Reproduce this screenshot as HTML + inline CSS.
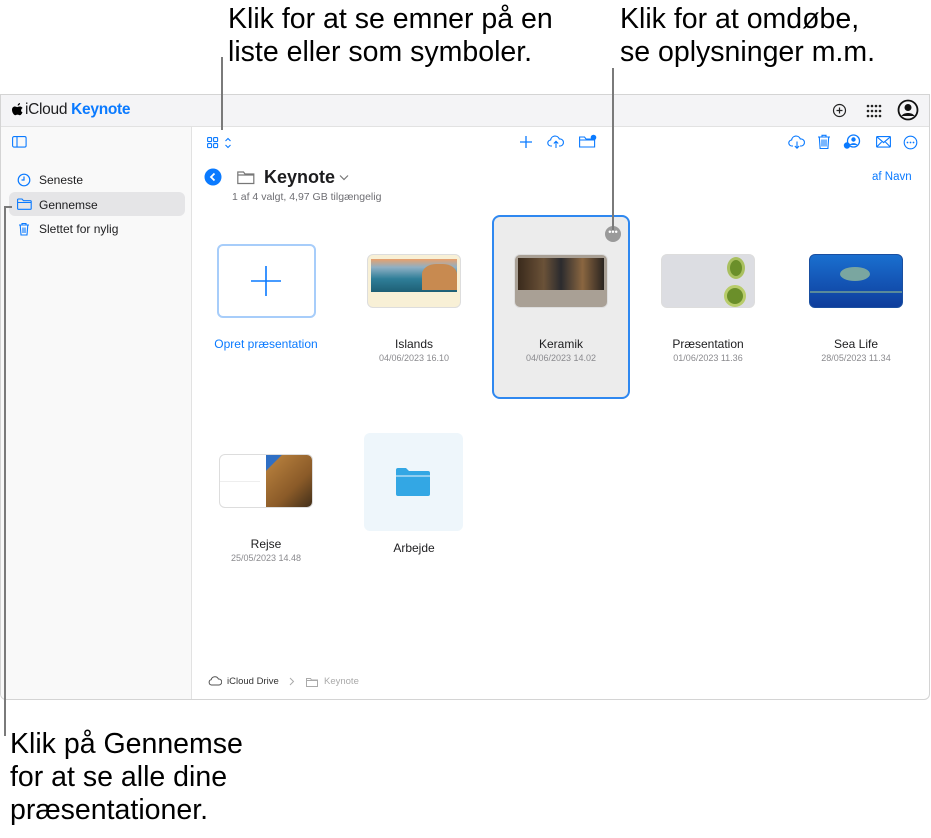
<!DOCTYPE html>
<html><head><meta charset="utf-8"><style>
*{margin:0;padding:0;box-sizing:border-box}
body{width:931px;height:838px;background:#fff;font-family:"Liberation Sans",sans-serif;position:relative;overflow:hidden;color:#1d1d1f}
.a{position:absolute}
.call{font-size:28.5px;line-height:33px;color:#000;white-space:nowrap}
.ln{background:#7a7a7a;position:absolute}
.nm{position:absolute;font-size:12px;text-align:center;width:140px;color:#1d1d1f}
.dt{position:absolute;font-size:9px;text-align:center;width:140px;color:#8a8a8e}
.th{position:absolute;width:94px;height:54px;border-radius:6px;overflow:hidden;border:1px solid #ddd}
svg{position:absolute}
</style></head><body>
<div class="a call" style="left:228px;top:3px">Klik for at se emner på en<br>liste eller som symboler.</div>
<div class="a call" style="left:620px;top:3px">Klik for at omdøbe,<br>se oplysninger m.m.</div>
<div class="a call" style="left:10px;top:728px">Klik på Gennemse<br>for at se alle dine<br>præsentationer.</div>

<div class="a" style="left:0;top:94px;width:930px;height:606px;border:1px solid #d4d4d4;border-radius:0 0 6px 6px;overflow:hidden">
 <div class="a" style="left:0;top:0;width:930px;height:32px;background:#f4f4f6;border-bottom:1px solid #e2e2e2"></div>
 <div class="a" style="left:0;top:32px;width:191px;height:574px;background:#f9f9f9;border-right:1px solid #e2e2e2"></div>
</div>
<svg style="left:12px;top:103px" width="12" height="13" viewBox="0 0 12 13"><path d="M8 0c0 1.5-1 2.6-2.3 2.6C5.6 1.3 6.6.2 8 0zM10.5 9.2c-.6 1.4-1.5 3-2.6 3-1 0-1.3-.6-2.4-.6s-1.5.6-2.4.6C1.800 12.200 0 9.400 0 6.800 0 4.600 1.400 3.500 2.800 3.500c1 0 1.800.6 2.400.6.600 0 1.600-.7 2.700-.6.500 0 1.900.2 2.700 1.500-2.200 1.300-1.800 4.100-.1 4.200z" fill="#000"/></svg>
<div class="a" style="left:25px;top:101px;font-size:15.5px;letter-spacing:-0.3px">iCloud <span style="color:#0a7aff;font-weight:bold">Keynote</span></div>
<!-- top right icons -->
<svg style="left:832px;top:103px" width="15" height="15"><circle cx="7.5" cy="7.5" r="6" fill="none" stroke="#222" stroke-width="1.2"/><path d="M7.5 4.5v6M4.5 7.5h6" stroke="#222" stroke-width="1.2"/></svg>
<svg style="left:866px;top:104px" width="16" height="14"><g fill="#222"><circle cx="2" cy="2" r="1.3"/><circle cx="6" cy="2" r="1.3"/><circle cx="10" cy="2" r="1.3"/><circle cx="14" cy="2" r="1.3"/><circle cx="2" cy="7" r="1.3"/><circle cx="6" cy="7" r="1.3"/><circle cx="10" cy="7" r="1.3"/><circle cx="14" cy="7" r="1.3"/><circle cx="2" cy="12" r="1.3"/><circle cx="6" cy="12" r="1.3"/><circle cx="10" cy="12" r="1.3"/><circle cx="14" cy="12" r="1.3"/></g></svg>
<svg style="left:897px;top:99px" width="22" height="22"><circle cx="11" cy="11" r="9.5" fill="none" stroke="#111" stroke-width="1.8"/><circle cx="11" cy="8.5" r="3.5" fill="#111"/><path d="M4.5 17c2-4 11-4 13 0" fill="#111"/></svg>
<!-- sidebar -->
<svg style="left:12px;top:136px" width="15" height="12"><rect x=".6" y=".6" width="13.5" height="10.5" rx="1.5" fill="none" stroke="#0a7aff" stroke-width="1.1"/><path d="M5 .6v10.5" stroke="#0a7aff" stroke-width="1.1"/></svg>
<div class="a" style="left:9px;top:192px;width:176px;height:24px;background:#e5e5e7;border-radius:6px"></div>
<svg style="left:17px;top:173px" width="14" height="14"><circle cx="7" cy="7" r="5.8" fill="none" stroke="#0a7aff" stroke-width="1.2"/><path d="M7 3.5V7H4.5" fill="none" stroke="#0a7aff" stroke-width="1.2"/></svg>
<div class="a" style="left:39px;top:173px;font-size:12px">Seneste</div>
<svg style="left:17px;top:198px" width="15" height="12"><path d="M.6 2V10.5a.8.8 0 0 0 .8.8h12a.8.8 0 0 0 .8-.8V3.5a.8.8 0 0 0-.8-.8H6.5L5 1H1.4a.8.8 0 0 0-.8 1zM.6 4.5h13.6" fill="none" stroke="#0a7aff" stroke-width="1.1"/></svg>
<div class="a" style="left:39px;top:198px;font-size:12px">Gennemse</div>
<svg style="left:18px;top:222px" width="12" height="14"><path d="M1 3h10M4 3V1.5h4V3M2.2 3l.8 10h6l.8-10M5 5.5v5.5M7 5.5v5.5" fill="none" stroke="#0a7aff" stroke-width="1.1"/></svg>
<div class="a" style="left:39px;top:222px;font-size:12px">Slettet for nylig</div>
<!-- toolbar -->
<svg style="left:207px;top:137px" width="26" height="12"><g fill="none" stroke="#0a7aff" stroke-width="1.1"><rect x=".6" y=".6" width="4" height="4" rx=".8"/><rect x="6.6" y=".6" width="4" height="4" rx=".8"/><rect x=".6" y="6.6" width="4" height="4" rx=".8"/><rect x="6.6" y="6.6" width="4" height="4" rx=".8"/><path d="M18.5 4l2.5-2.5 2.5 2.5M18.5 8l2.5 2.5 2.5-2.5"/></g></svg>
<svg style="left:519px;top:135px" width="14" height="14"><path d="M7 1v12M1 7h12" stroke="#0a7aff" stroke-width="1.3"/></svg>
<svg style="left:547px;top:135px" width="18" height="14"><path d="M5 11H4a3 3 0 0 1-.4-6A4.5 4.5 0 0 1 12.3 4a3.5 3.5 0 0 1 1.2 7H12M9 13V6.5M6.8 8.5L9 6.3l2.2 2.2" fill="none" stroke="#0a7aff" stroke-width="1.1"/></svg>
<svg style="left:579px;top:134px" width="18" height="15"><path d="M.6 3v10h15V5H7L5.5 3zM.6 6h15" fill="none" stroke="#0a7aff" stroke-width="1.1"/><circle cx="14.5" cy="3.5" r="2.8" fill="#0a7aff"/></svg>
<svg style="left:788px;top:135px" width="18" height="15"><path d="M5 11H4a3 3 0 0 1-.4-6A4.5 4.5 0 0 1 12.3 4a3.5 3.5 0 0 1 1.2 7H12M9 6.5V13M6.8 11L9 13.2l2.2-2.2" fill="none" stroke="#0a7aff" stroke-width="1.1"/></svg>
<svg style="left:817px;top:134px" width="14" height="16"><path d="M1 3h12M5 3V1.3h4V3M2.3 3l.8 11.5h7.8l.8-11.5M5 5.5v7M7 5.5v7M9 5.5v7" fill="none" stroke="#0a7aff" stroke-width="1.1"/></svg>
<svg style="left:843px;top:134px" width="18" height="16"><circle cx="10.5" cy="7" r="6" fill="none" stroke="#0a7aff" stroke-width="1.3"/><circle cx="10.5" cy="5.5" r="2.2" fill="#0a7aff"/><path d="M6.5 11c1.5-2.5 6.5-2.5 8 0" fill="#0a7aff"/><circle cx="4" cy="11.5" r="3.2" fill="#0a7aff"/></svg>
<svg style="left:876px;top:136px" width="15" height="12"><rect x=".6" y=".6" width="13.8" height="10.5" rx="1" fill="none" stroke="#0a7aff" stroke-width="1.1"/><path d="M.6 .6l7 6 7-6M.6 11l5-5M14.4 11l-5-5" fill="none" stroke="#0a7aff" stroke-width="1.1"/></svg>
<svg style="left:903px;top:135px" width="15" height="15"><circle cx="7.5" cy="7.5" r="6.3" fill="none" stroke="#0a7aff" stroke-width="1.1"/><g fill="#0a7aff"><circle cx="4.5" cy="7.5" r=".9"/><circle cx="7.5" cy="7.5" r=".9"/><circle cx="10.5" cy="7.5" r=".9"/></g></svg>
<!-- title -->
<svg style="left:204px;top:168px" width="18" height="18"><circle cx="9" cy="9" r="8.5" fill="#0a7aff"/><path d="M10.5 5.5L7 9l3.5 3.5" fill="none" stroke="#fff" stroke-width="1.8"/></svg>
<svg style="left:237px;top:170px" width="18" height="15"><path d="M.8 2v11.5h16V4H8L6.5 2zM.8 5h16" fill="none" stroke="#777" stroke-width="1.2"/></svg>
<div class="a" style="left:264px;top:167px;font-size:18px;font-weight:bold">Keynote</div>
<svg style="left:339px;top:174px" width="10" height="7"><path d="M1 1.5l4 4 4-4" fill="none" stroke="#777" stroke-width="1.2"/></svg>
<div class="a" style="left:232px;top:191px;font-size:10.5px;color:#6e6e73">1 af 4 valgt, 4,97 GB tilgængelig</div>
<div class="a" style="left:872px;top:171px;font-size:11.5px;color:#0a7aff">af Navn</div>
<!-- tiles -->
<div class="a" style="left:492px;top:215px;width:138px;height:184px;background:#ececec;border:2px solid #2f88f0;border-radius:8px"></div>
<div class="a" style="left:605px;top:226px;width:16px;height:16px;border-radius:50%;background:#9a9a9a;color:#fff;font-size:9px;line-height:12px;text-align:center">•••</div>
<div class="a" style="left:217px;top:244px;width:99px;height:74px;border:2px solid #a7cdfa;border-radius:6px"></div>
<svg style="left:250px;top:265px" width="32" height="32"><path d="M16 1v30M1 16h30" stroke="#0a7aff" stroke-width="1.6"/></svg>
<div class="nm" style="left:196px;top:337px;color:#0a7aff">Opret præsentation</div>
<div class="th" style="left:367px;top:254px;background:#f8f0d6"><div style="margin:4px 3px;height:33px;background:linear-gradient(180deg,#e8a06c 0,#8fb0c4 25%,#2f7e98 60%,#1e5f75);position:relative"><div style="position:absolute;right:0;top:5px;width:35px;height:26px;background:#c88a50;border-radius:40% 40% 0 0"></div></div></div>
<div class="nm" style="left:344px;top:337px">Islands</div><div class="dt" style="left:344px;top:353px">04/06/2023 16.10</div>
<div class="th" style="left:514px;top:254px;background:#a9a095"><div style="margin:3px;height:32px;background:linear-gradient(90deg,#3a2a1c,#6b5238 30%,#2b2b2e 50%,#8a6640 75%,#2a2420)"></div></div>
<div class="nm" style="left:491px;top:337px">Keramik</div><div class="dt" style="left:491px;top:353px">04/06/2023 14.02</div>
<div class="th" style="left:661px;top:254px;background:#dcdde2"><div style="position:absolute;left:65px;top:2px;width:18px;height:22px;border-radius:50%;background:#6b8f2a;border:3px solid #a9c060"></div><div style="position:absolute;left:62px;top:30px;width:22px;height:22px;border-radius:50%;background:#6b8f2a;border:3px solid #b8cc6a"></div></div>
<div class="nm" style="left:638px;top:337px">Præsentation</div><div class="dt" style="left:638px;top:353px">01/06/2023 11.36</div>
<div class="th" style="left:809px;top:254px;background:linear-gradient(180deg,#1a6fcf,#0e3d9c);border-color:#1a4fa0"><div style="position:absolute;left:30px;top:12px;width:30px;height:14px;border-radius:50%;background:#7aa6a0"></div><div style="position:absolute;left:0;top:36px;width:94px;height:2px;background:#5a8a9a"></div></div>
<div class="nm" style="left:786px;top:337px">Sea Life</div><div class="dt" style="left:786px;top:353px">28/05/2023 11.34</div>
<div class="th" style="left:219px;top:454px;background:#fff"><div style="position:absolute;left:46px;top:0;width:48px;height:54px;background:linear-gradient(135deg,#2f6fc4 0,#2f6fc4 15%,#b07a3a 16%,#8a5a28 60%,#3a2a18)"></div><div style="position:absolute;left:0;top:26px;width:40px;height:1px;background:#eee"></div></div>
<div class="nm" style="left:196px;top:537px">Rejse</div><div class="dt" style="left:196px;top:553px">25/05/2023 14.48</div>
<div class="a" style="left:364px;top:433px;width:99px;height:98px;background:#eef6fb;border-radius:6px"></div>
<svg style="left:395px;top:467px" width="36" height="30"><path d="M1 3a2 2 0 0 1 2-2h8l3 3h19a2 2 0 0 1 2 2v21a2 2 0 0 1-2 2H3a2 2 0 0 1-2-2z" fill="#33a7e4"/><path d="M1 9h34" stroke="#eef6fb" stroke-width="1"/></svg>
<div class="nm" style="left:344px;top:541px">Arbejde</div>
<!-- breadcrumb -->
<svg style="left:208px;top:676px" width="14" height="10"><path d="M3.5 9a2.7 2.7 0 0 1-.3-5.3A3.8 3.8 0 0 1 10.400 3a3 3 0 0 1 .600 6z" fill="none" stroke="#555" stroke-width="1"/></svg>
<div class="a" style="left:227px;top:676px;font-size:9.5px;color:#333">iCloud Drive</div>
<svg style="left:289px;top:677px" width="6" height="9"><path d="M1 1l3.5 3.5L1 8" fill="none" stroke="#aaa" stroke-width="1"/></svg>
<svg style="left:306px;top:677px" width="12" height="10"><path d="M.5 1.5v8h11V3H5.500L4.500 1.500zM.5 3.5h11" fill="none" stroke="#aaa" stroke-width="1"/></svg>
<div class="a" style="left:324px;top:676px;font-size:9.5px;color:#aaa">Keynote</div>
<!-- callout lines -->
<div class="ln" style="left:221px;top:57px;width:2px;height:73px"></div>
<div class="ln" style="left:612px;top:68px;width:2px;height:162px"></div>
<div class="ln" style="left:4px;top:206px;width:2px;height:530px"></div>
<div class="ln" style="left:4px;top:206px;width:8px;height:2px"></div>
</body></html>
